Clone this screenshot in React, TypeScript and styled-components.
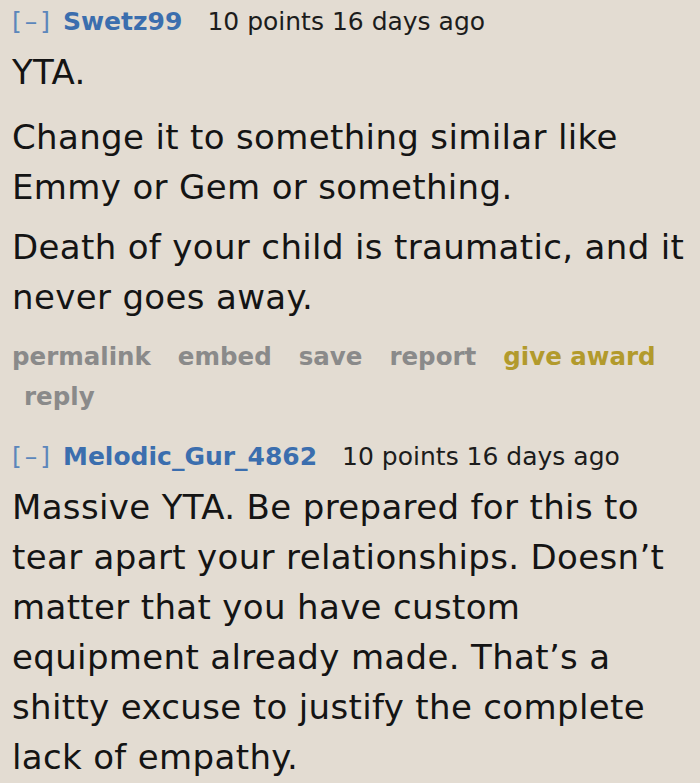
import React from "react";
import styled, { createGlobalStyle } from "styled-components";

const GlobalStyle = createGlobalStyle`
  html, body {
    margin: 0;
    padding: 0;
    background: #e3dcd2;
  }
  body {
    font-family: "DejaVu Sans", Verdana, sans-serif;
    color: #1a1a1a;
  }
`;

interface CommentProps {
  author: string;
  points: number;
  age: string;
  paragraphs: string[];
  actions?: boolean;
}

const Page = styled.div`
  width: 700px;
  min-height: 783px;
  box-sizing: border-box;
  padding: 5px 0 0 12px;
  overflow: hidden;
`;

const Entry = styled.div`
  display: flex;
  flex-direction: column;
`;

const Tagline = styled.div`
  display: flex;
  align-items: baseline;
  font-size: 25px;
  line-height: 34px;
  white-space: nowrap;
`;

const Expand = styled.span`
  color: #5c86bb;
  letter-spacing: 3px;
  margin-right: 10px;
`;

const Author = styled.span`
  color: #3b6eae;
  font-weight: bold;
  margin-right: 25px;
`;

const Meta = styled.span`
  color: #1c1c1c;
`;

const Body = styled.div`
  margin-top: 8px;
  font-size: 34px;
  line-height: 50px;
  letter-spacing: 0.35px;
  color: #141414;
`;

const Para = styled.p`
  margin: 0 0 10px;
  &:first-child {
    margin-bottom: 15px;
  }
  &:last-child {
    margin-bottom: 0;
  }
`;

const FlatList = styled.ul`
  list-style: none;
  margin: 15px 0 23px;
  padding: 0;
  display: flex;
  flex-wrap: wrap;
  width: 660px;
  column-gap: 27px;
  font-size: 24.5px;
  line-height: 40px;
  font-weight: bold;
`;

const Action = styled.li<{ $award?: boolean; $indent?: boolean }>`
  color: ${(p) => (p.$award ? "#b29a2c" : "#8a8a8a")};
  padding-left: ${(p) => (p.$indent ? "12px" : "0")};
`;

function Comment({ author, points, age, paragraphs, actions }: CommentProps) {
  return (
    <Entry>
      <Tagline>
        <Expand>[–]</Expand>
        <Author>{author}</Author>
        <Meta>
          {points} points {age}
        </Meta>
      </Tagline>
      <Body>
        {paragraphs.map((text, i) => (
          <Para key={i}>{text}</Para>
        ))}
      </Body>
      {actions && (
        <FlatList>
          <Action>permalink</Action>
          <Action>embed</Action>
          <Action>save</Action>
          <Action>report</Action>
          <Action $award>give award</Action>
          <Action $indent>reply</Action>
        </FlatList>
      )}
    </Entry>
  );
}

export default function App() {
  return (
    <Page>
      <GlobalStyle />
      <Comment
        author="Swetz99"
        points={10}
        age="16 days ago"
        paragraphs={[
          "YTA.",
          "Change it to something similar like Emmy or Gem or something.",
          "Death of your child is traumatic, and it never goes away.",
        ]}
        actions
      />
      <Comment
        author="Melodic_Gur_4862"
        points={10}
        age="16 days ago"
        paragraphs={[
          "Massive YTA. Be prepared for this to tear apart your relationships. Doesn’t matter that you have custom equipment already made. That’s a shitty excuse to justify the complete lack of empathy.",
        ]}
      />
    </Page>
  );
}
